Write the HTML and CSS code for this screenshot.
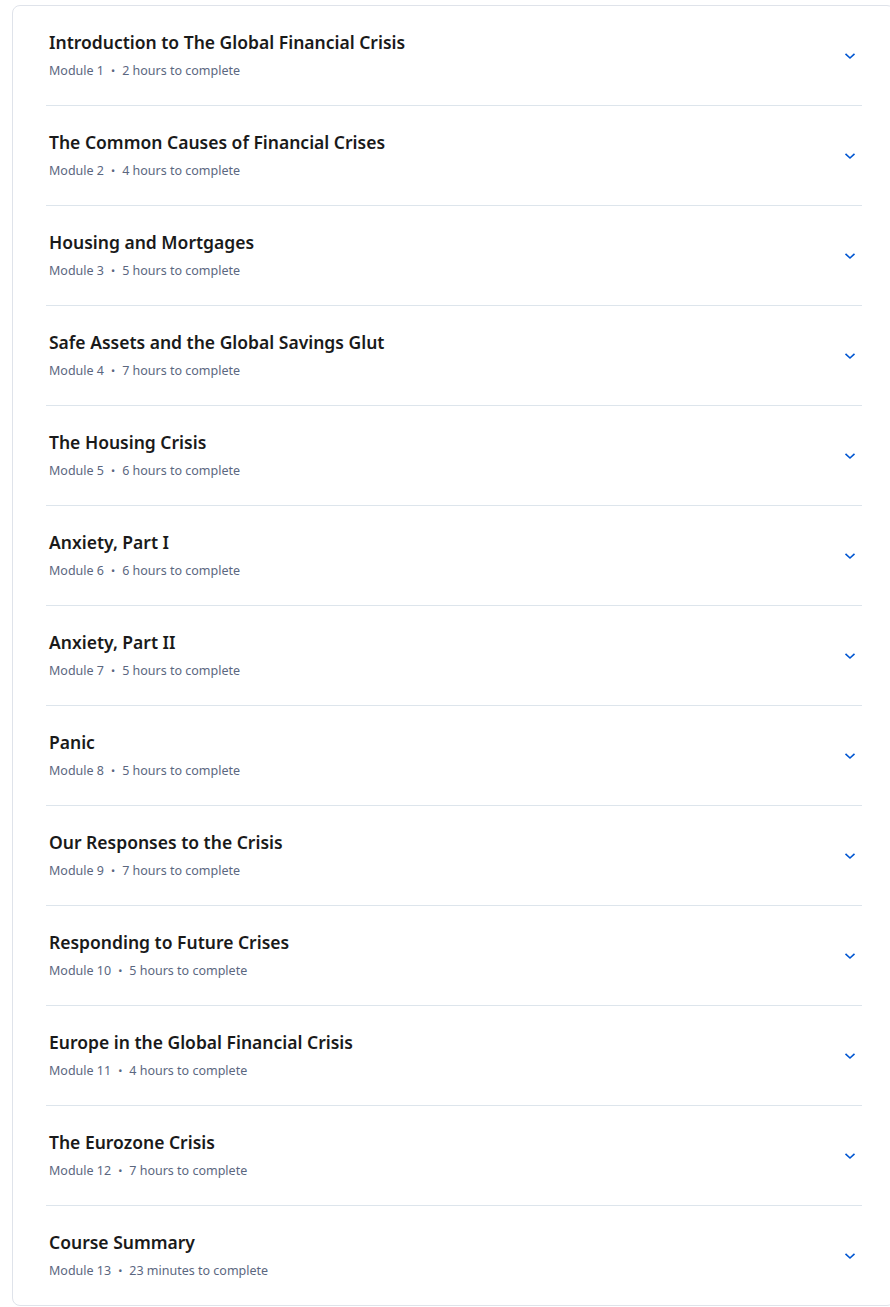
FILE: index.html
```html
<!DOCTYPE html>
<html>
<head>
<meta charset="utf-8">
<link rel="stylesheet" href="styles.css">
</head>
<body>
<div class="card">
  <div class="row"><div class="info"><div class="title">Introduction to The Global Financial Crisis</div><div class="meta"><span>Module 1</span><span class="dot">•</span><span>2 hours to complete</span></div></div><div class="chev"><svg width="12" height="8" viewBox="0 0 12 8"><path d="M1.5 1.8 L6 6 L10.5 1.8" fill="none" stroke="#0056d2" stroke-width="1.6"/></svg></div></div>
  <div class="row"><div class="info"><div class="title">The Common Causes of Financial Crises</div><div class="meta"><span>Module 2</span><span class="dot">•</span><span>4 hours to complete</span></div></div><div class="chev"><svg width="12" height="8" viewBox="0 0 12 8"><path d="M1.5 1.8 L6 6 L10.5 1.8" fill="none" stroke="#0056d2" stroke-width="1.6"/></svg></div></div>
  <div class="row"><div class="info"><div class="title">Housing and Mortgages</div><div class="meta"><span>Module 3</span><span class="dot">•</span><span>5 hours to complete</span></div></div><div class="chev"><svg width="12" height="8" viewBox="0 0 12 8"><path d="M1.5 1.8 L6 6 L10.5 1.8" fill="none" stroke="#0056d2" stroke-width="1.6"/></svg></div></div>
  <div class="row"><div class="info"><div class="title">Safe Assets and the Global Savings Glut</div><div class="meta"><span>Module 4</span><span class="dot">•</span><span>7 hours to complete</span></div></div><div class="chev"><svg width="12" height="8" viewBox="0 0 12 8"><path d="M1.5 1.8 L6 6 L10.5 1.8" fill="none" stroke="#0056d2" stroke-width="1.6"/></svg></div></div>
  <div class="row"><div class="info"><div class="title">The Housing Crisis</div><div class="meta"><span>Module 5</span><span class="dot">•</span><span>6 hours to complete</span></div></div><div class="chev"><svg width="12" height="8" viewBox="0 0 12 8"><path d="M1.5 1.8 L6 6 L10.5 1.8" fill="none" stroke="#0056d2" stroke-width="1.6"/></svg></div></div>
  <div class="row"><div class="info"><div class="title">Anxiety, Part I</div><div class="meta"><span>Module 6</span><span class="dot">•</span><span>6 hours to complete</span></div></div><div class="chev"><svg width="12" height="8" viewBox="0 0 12 8"><path d="M1.5 1.8 L6 6 L10.5 1.8" fill="none" stroke="#0056d2" stroke-width="1.6"/></svg></div></div>
  <div class="row"><div class="info"><div class="title">Anxiety, Part II</div><div class="meta"><span>Module 7</span><span class="dot">•</span><span>5 hours to complete</span></div></div><div class="chev"><svg width="12" height="8" viewBox="0 0 12 8"><path d="M1.5 1.8 L6 6 L10.5 1.8" fill="none" stroke="#0056d2" stroke-width="1.6"/></svg></div></div>
  <div class="row"><div class="info"><div class="title">Panic</div><div class="meta"><span>Module 8</span><span class="dot">•</span><span>5 hours to complete</span></div></div><div class="chev"><svg width="12" height="8" viewBox="0 0 12 8"><path d="M1.5 1.8 L6 6 L10.5 1.8" fill="none" stroke="#0056d2" stroke-width="1.6"/></svg></div></div>
  <div class="row"><div class="info"><div class="title">Our Responses to the Crisis</div><div class="meta"><span>Module 9</span><span class="dot">•</span><span>7 hours to complete</span></div></div><div class="chev"><svg width="12" height="8" viewBox="0 0 12 8"><path d="M1.5 1.8 L6 6 L10.5 1.8" fill="none" stroke="#0056d2" stroke-width="1.6"/></svg></div></div>
  <div class="row"><div class="info"><div class="title">Responding to Future Crises</div><div class="meta"><span>Module 10</span><span class="dot">•</span><span>5 hours to complete</span></div></div><div class="chev"><svg width="12" height="8" viewBox="0 0 12 8"><path d="M1.5 1.8 L6 6 L10.5 1.8" fill="none" stroke="#0056d2" stroke-width="1.6"/></svg></div></div>
  <div class="row"><div class="info"><div class="title">Europe in the Global Financial Crisis</div><div class="meta"><span>Module 11</span><span class="dot">•</span><span>4 hours to complete</span></div></div><div class="chev"><svg width="12" height="8" viewBox="0 0 12 8"><path d="M1.5 1.8 L6 6 L10.5 1.8" fill="none" stroke="#0056d2" stroke-width="1.6"/></svg></div></div>
  <div class="row"><div class="info"><div class="title">The Eurozone Crisis</div><div class="meta"><span>Module 12</span><span class="dot">•</span><span>7 hours to complete</span></div></div><div class="chev"><svg width="12" height="8" viewBox="0 0 12 8"><path d="M1.5 1.8 L6 6 L10.5 1.8" fill="none" stroke="#0056d2" stroke-width="1.6"/></svg></div></div>
  <div class="row"><div class="info"><div class="title">Course Summary</div><div class="meta"><span>Module 13</span><span class="dot">•</span><span>23 minutes to complete</span></div></div><div class="chev"><svg width="12" height="8" viewBox="0 0 12 8"><path d="M1.5 1.8 L6 6 L10.5 1.8" fill="none" stroke="#0056d2" stroke-width="1.6"/></svg></div></div>
</div>
</body>
</html>
```
FILE: styles.css
```css
html, body {
  margin: 0;
  padding: 0;
  background: #ffffff;
  overflow: hidden;
}
body {
  padding: 5px 0 0 12px;
  font-family: "Noto Sans", "Liberation Sans", sans-serif;
}
.card {
  width: 883px;
  box-sizing: border-box;
  border: 1px solid #dfe3ea;
  border-radius: 8px;
  padding: 0 32px 0 33px;
}
.row {
  display: flex;
  align-items: center;
  height: 100px;
  box-sizing: border-box;
  border-bottom: 1px solid #dde5ec;
}
.row:last-child {
  border-bottom: none;
  height: 99px;
}
.info {
  flex: 1;
  padding-left: 3px;
}
.title {
  font-size: 17.5px;
  line-height: 24px;
  font-weight: 600;
  color: #1a1a1a;
}
.meta {
  margin-top: 7px;
  font-size: 12.5px;
  line-height: 20px;
  color: #5b6780;
  display: flex;
  gap: 7px;
}
.dot {
  font-size: 11px;
}
.chev {
  width: 24px;
  height: 24px;
  display: flex;
  align-items: center;
  justify-content: center;
}
```
